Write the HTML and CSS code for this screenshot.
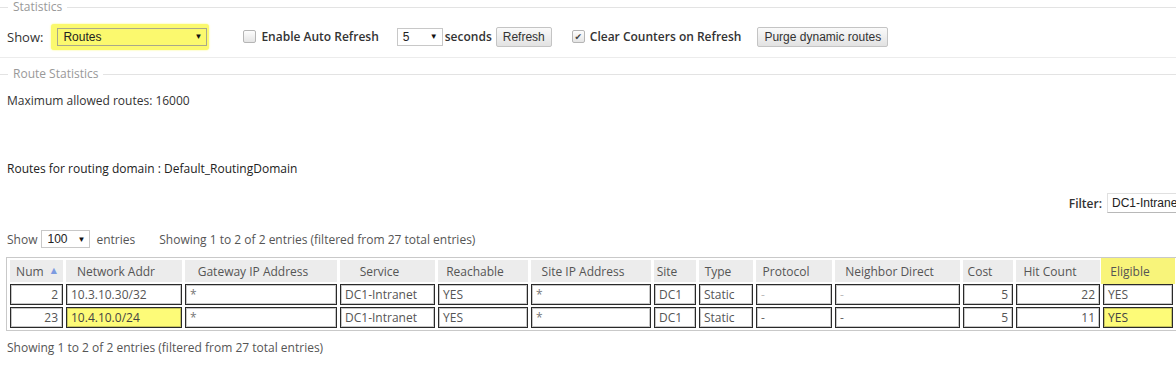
FILE: index.html
```html
<!DOCTYPE html>
<html lang="en">
<head>
  <meta charset="UTF-8" />
  <title>Statistics - Routes</title>
  <link rel="stylesheet" href="styles.css">
</head>
<body>
  <div class="page">

    <div class="legend legend-first"><span>Statistics</span></div>

    <div class="controls">
      <span class="label">Show:</span>
      <span class="highlight">
        <span class="select select-wide"><span>Routes</span><span class="arrow">&#9660;</span></span>
      </span>
      <span class="check"></span>
      <span class="strong">Enable Auto Refresh</span>
      <span class="select select-small"><span>5</span><span class="arrow">&#9660;</span></span>
      <span class="strong seconds">seconds</span>
      <button class="btn btn-refresh">Refresh</button>
      <span class="check checked">&#10004;</span>
      <span class="strong">Clear Counters on Refresh</span>
      <button class="btn btn-purge">Purge dynamic routes</button>
    </div>

    <div class="legend legend-second"><span>Route Statistics</span></div>

    <div class="text max-routes">Maximum allowed routes: 16000</div>
    <div class="text domain">Routes for routing domain : Default_RoutingDomain</div>

    <div class="filter-row">
      <span class="strong">Filter:</span>
      <span class="filter-input">DC1-Intranet</span>
    </div>

    <div class="entries-row">
      <span>Show</span>
      <span class="select select-len"><span>100</span><span class="arrow">&#9660;</span></span>
      <span>entries</span>
      <span class="info">Showing 1 to 2 of 2 entries (filtered from 27 total entries)</span>
    </div>

    <table class="routes">
      <thead>
        <tr>
          <th class="c-num">Num <span class="sort">&#9650;</span></th>
          <th class="c-net">Network Addr</th>
          <th class="c-gw">Gateway IP Address</th>
          <th class="c-svc">Service</th>
          <th class="c-reach">Reachable</th>
          <th class="c-sip">Site IP Address</th>
          <th class="c-site">Site</th>
          <th class="c-type">Type</th>
          <th class="c-proto">Protocol</th>
          <th class="c-neigh">Neighbor Direct</th>
          <th class="c-cost">Cost</th>
          <th class="c-hit">Hit Count</th>
          <th class="c-elig mark">Eligible</th>
          <th class="c-more"></th>
        </tr>
      </thead>
      <tbody>
        <tr>
          <td class="num">2</td>
          <td>10.3.10.30/32</td>
          <td class="star">*</td>
          <td>DC1-Intranet</td>
          <td>YES</td>
          <td class="star">*</td>
          <td>DC1</td>
          <td>Static</td>
          <td class="dash faint">-</td>
          <td class="dash faint">-</td>
          <td class="num">5</td>
          <td class="num">22</td>
          <td>YES</td>
          <td></td>
        </tr>
        <tr>
          <td class="num">23</td>
          <td class="mark">10.4.10.0/24</td>
          <td class="star">*</td>
          <td>DC1-Intranet</td>
          <td>YES</td>
          <td class="star">*</td>
          <td>DC1</td>
          <td>Static</td>
          <td class="dash">-</td>
          <td class="dash">-</td>
          <td class="num">5</td>
          <td class="num">11</td>
          <td class="mark">YES</td>
          <td></td>
        </tr>
      </tbody>
    </table>

    <div class="text footer-info">Showing 1 to 2 of 2 entries (filtered from 27 total entries)</div>

  </div>
</body>
</html>
```

FILE: styles.css
```css
body {
  margin: 0;
  overflow: hidden;
  font-family: "Open Sans", "DejaVu Sans", sans-serif;
  font-size: 12px;
  color: #333;
  background: #fff;
}

.page {
  width: 1240px;
}

/* fieldset-like titles */
.legend {
  display: flex;
  align-items: center;
  height: 16px;
  color: #999;
  font-size: 12px;
}

.legend::before {
  content: "";
  width: 8px;
  border-top: 1px solid #e3e3e3;
}

.legend::after {
  content: "";
  flex: 1;
  border-top: 1px solid #e3e3e3;
}

.legend span {
  padding: 0 5px;
  line-height: 16px;
}

.legend-first {
  margin-top: -1px;
}

.legend-second {
  margin-top: 8px;
}

.controls {
  display: flex;
  align-items: center;
  height: 27px;
  margin-top: 8px;
  padding: 0 0 7px 7px;
  border-bottom: 1px solid #ececec;
}

.label {
  font-size: 13px;
}

.strong {
  font-weight: 600;
  color: #333;
}

.highlight {
  display: flex;
  align-items: center;
  margin-left: 8px;
  padding: 4px 2px 4px 6px;
  background: #fbf96e;
  border-radius: 3px;
  box-shadow: 0 0 2px #fbf96e;
}

.select {
  display: flex;
  align-items: center;
  justify-content: space-between;
  box-sizing: border-box;
  height: 18px;
  padding: 0 4px 0 5px;
  border: 1px solid #c8c8c8;
  background: #fff;
  font-family: "Liberation Sans", Arial, sans-serif;
  font-size: 12px;
  color: #222;
}

.select .arrow {
  font-size: 8px;
  color: #111;
}

.select-wide {
  width: 150px;
  background: transparent;
  border-color: #a9a88a;
}

.select-small {
  width: 46px;
  margin-left: 18px;
}

.select-len {
  width: 49px;
  margin: 0 6px 0 4px;
}

.check {
  display: inline-flex;
  align-items: center;
  justify-content: center;
  box-sizing: border-box;
  width: 13px;
  height: 13px;
  margin: 0 5px 0 34px;
  border: 1px solid #b5b5b5;
  border-radius: 2px;
  background: linear-gradient(#fdfdfd, #e4e4e4);
  font-size: 9px;
  color: #444;
}

.check.checked {
  margin-left: 20px;
}

.seconds {
  margin-left: 2px;
}

.btn {
  height: 20px;
  padding: 0 6px;
  border: 1px solid #c4c4c4;
  border-radius: 2px;
  background: linear-gradient(#fafafa, #e2e2e2);
  font-family: "Liberation Sans", Arial, sans-serif;
  font-size: 12px;
  color: #333;
}

.btn-refresh {
  margin-left: 4px;
}

.btn-purge {
  margin-left: 16px;
}

.text {
  padding-left: 7px;
  line-height: 16px;
}

.max-routes {
  margin-top: 11px;
  color: #333;
}

.domain {
  margin-top: 52px;
  color: #222;
}

.filter-row {
  display: flex;
  align-items: center;
  justify-content: flex-end;
  margin-top: 16px;
  height: 20px;
}

.filter-input {
  box-sizing: border-box;
  width: 130px;
  height: 20px;
  margin: 0 3px 0 5px;
  padding: 2px 4px;
  border: 1px solid #e0e0e0;
  border-bottom-color: #b8b8b8;
  font-family: "Liberation Sans", Arial, sans-serif;
  font-size: 12px;
  color: #222;
  white-space: nowrap;
}

.entries-row {
  display: flex;
  align-items: center;
  height: 18px;
  margin-top: 17px;
  padding-left: 7px;
  color: #555;
}

.info {
  margin-left: 24px;
}

/* routes table */
.routes {
  margin: 9px 0 0 6px;
  table-layout: fixed;
  border-collapse: separate;
  border-spacing: 3px 2px;
  border: 1px solid #c9c9c9;
  font-size: 12px;
}

.routes th {
  height: 22px;
  padding: 0 18px 0 2px;
  box-sizing: border-box;
  background: #ececec;
  font-weight: normal;
  color: #555;
  text-align: center;
  white-space: nowrap;
}

.routes th.c-num {
  padding: 0 4px;
}

.routes th.mark {
  background: #f8f47a;
  box-shadow: 0 0 0 2px #f8f47a;
}

.sort {
  font-size: 8px;
  color: #7d9be0;
  vertical-align: 3px;
  margin-left: 4px;
}

.routes td {
  height: 21px;
  padding: 0 4px;
  box-sizing: border-box;
  border: 1px solid #2a2a2a;
  box-shadow: inset 0 0 0 1px rgba(0, 0, 0, 0.22);
  color: #555;
  white-space: nowrap;
  overflow: hidden;
}

.routes td.num {
  text-align: right;
}

.routes td.mark {
  background: #fdfb78;
  color: #444;
}

.routes td.star {
  color: #777;
}

.routes td.dash {
  color: #666;
}

.routes td.faint {
  color: #bbb;
}

.c-num { width: 53px; }
.c-net { width: 116px; }
.c-gw { width: 152px; }
.c-svc { width: 95px; }
.c-reach { width: 90px; }
.c-sip { width: 120px; }
.c-site { width: 42px; }
.c-type { width: 54px; }
.c-proto { width: 76px; }
.c-neigh { width: 125px; }
.c-cost { width: 50px; }
.c-hit { width: 84px; }
.c-elig { width: 70px; }
.c-more { width: 60px; }

.footer-info {
  margin-top: 9px;
  color: #555;
}
```
